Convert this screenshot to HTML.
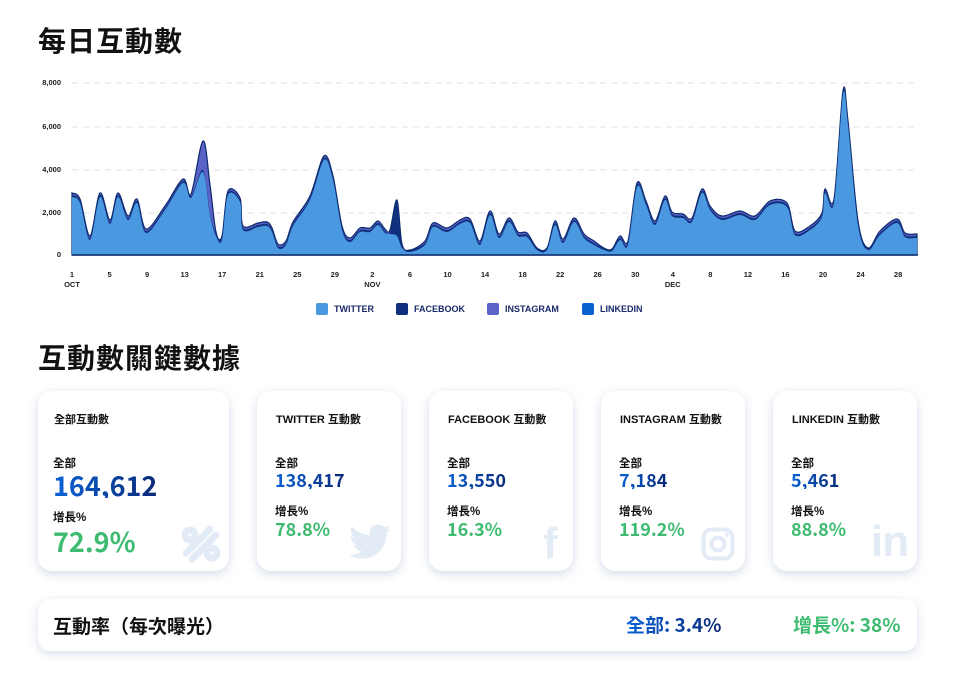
<!DOCTYPE html>
<html><head><meta charset="utf-8"><style>
*{margin:0;padding:0;box-sizing:border-box}
body{width:959px;height:680px;background:#fff;position:relative;overflow:hidden;font-family:"Liberation Sans","Noto Sans CJK TC",sans-serif;color:#111}
.abs{position:absolute}
h1{position:absolute;font-size:28px;font-weight:700;letter-spacing:1px;color:#111}
.card{position:absolute;top:391px;height:180px;background:#fff;border-radius:14px;box-shadow:0 3px 10px rgba(60,90,160,.22);overflow:hidden}
.ct{position:absolute;left:16px;top:20px;font-size:11px;font-weight:700}
.lbl{position:absolute;left:18px;font-size:11.5px;font-weight:700}
.num{position:absolute;left:18px;font-weight:700;font-family:"Noto Sans CJK TC",sans-serif;line-height:1;background:linear-gradient(90deg,#0a62d6,#0a2a78);-webkit-background-clip:text;background-clip:text;color:transparent}
.grn{position:absolute;left:18px;font-weight:700;font-family:"Noto Sans CJK TC",sans-serif;line-height:1;color:#3dbb70}
.ic{position:absolute;color:#e3ebf6;font-weight:700}
.ax{position:absolute;font-size:7.5px;font-weight:700;color:#222;transform:translateX(-50%);text-align:center;line-height:10px}
.yl{position:absolute;font-size:7.5px;font-weight:700;color:#222;right:898px}
.lg{position:absolute;top:303px;font-size:9px;font-weight:700;color:#1a2a6a;display:flex;align-items:center;gap:6px}
.lg i{display:inline-block;width:12px;height:12px;border-radius:2px}
</style></head><body>
<h1 style="left:38px;top:20px">每日互動數</h1>
<div class="yl" style="top:78px">8,000</div>
<div class="yl" style="top:122px">6,000</div>
<div class="yl" style="top:165px">4,000</div>
<div class="yl" style="top:208px">2,000</div>
<div class="yl" style="top:250px">0</div>
<svg class="abs" style="left:0;top:0" width="959" height="300">
<g stroke="#dde2ee" stroke-dasharray="6,5" stroke-width="1">
<line x1="72" y1="83" x2="918" y2="83"/><line x1="72" y1="127" x2="918" y2="127"/><line x1="72" y1="170" x2="918" y2="170"/><line x1="72" y1="213" x2="918" y2="213"/></g>
<path id="tot" fill="#5b63c8" stroke="#0b2a6e" stroke-width="1.2"/>
<path id="fb" fill="#10307e"/>
<path id="tw" fill="#4a98e0"/>
<line x1="72" y1="255" x2="918" y2="255" stroke="#0b2a6e" stroke-width="1.5"/>
</svg>
<div id="xl"></div>
<div class="lg" style="left:316px"><i style="background:#4a98e0"></i>TWITTER</div>
<div class="lg" style="left:396px"><i style="background:#10307e"></i>FACEBOOK</div>
<div class="lg" style="left:487px"><i style="background:#5b63c8"></i>INSTAGRAM</div>
<div class="lg" style="left:582px"><i style="background:#0a62d0"></i>LINKEDIN</div>

<h1 style="left:38px;top:337px">互動數關鍵數據</h1>

<div class="card" style="left:38px;width:191px">
<div class="ct">全部互動數</div>
<div class="lbl" style="top:64px;left:15px">全部</div>
<div class="num" style="top:80px;left:15px;font-size:27px">164,612</div>
<div class="lbl" style="top:118px;left:15px">增長%</div>
<div class="grn" style="top:136px;left:15px;font-size:27px">72.9%</div>
<svg class="abs" style="left:142px;top:132px" width="42" height="42" viewBox="0 0 42 42"><g fill="none" stroke="#e3ebf6" stroke-width="7" stroke-linecap="round"><path d="M6 30 L30 6"/><path d="M12 36 L36 12"/><circle cx="10" cy="12" r="5"/><circle cx="32" cy="30" r="5"/></g></svg>
</div>

<div class="card" style="left:257px;width:144px">
<div class="ct" style="left:19px">TWITTER 互動數</div>
<div class="lbl" style="top:64px">全部</div>
<div class="num" style="top:80px;font-size:18px">138,417</div>
<div class="lbl" style="top:112px">增長%</div>
<div class="grn" style="top:129px;font-size:18px">78.8%</div>
<svg class="abs" style="left:92px;top:133px" width="42" height="36" viewBox="0 0 24 20"><path fill="#e3ebf6" d="M24 2.4a9.8 9.8 0 0 1-2.8.8A4.9 4.9 0 0 0 23.3.4a9.9 9.9 0 0 1-3.1 1.2A4.9 4.9 0 0 0 11.8 6 14 14 0 0 1 1.7.9a4.9 4.9 0 0 0 1.5 6.6A4.9 4.9 0 0 1 1 6.9a4.9 4.9 0 0 0 3.9 4.8 4.9 4.9 0 0 1-2.2.1 4.9 4.9 0 0 0 4.6 3.4A9.9 9.9 0 0 1 0 17.3 14 14 0 0 0 7.5 19.5c9 0 14-7.5 14-14v-.6A10 10 0 0 0 24 2.4z"/></svg>
</div>

<div class="card" style="left:429px;width:144px">
<div class="ct" style="left:19px">FACEBOOK 互動數</div>
<div class="lbl" style="top:64px">全部</div>
<div class="num" style="top:80px;font-size:18px">13,550</div>
<div class="lbl" style="top:112px">增長%</div>
<div class="grn" style="top:129px;font-size:18px">16.3%</div>
<div class="ic" style="left:114px;top:128px;font-size:44px;font-family:'Liberation Sans',sans-serif">f</div>
</div>

<div class="card" style="left:601px;width:144px">
<div class="ct" style="left:19px">INSTAGRAM 互動數</div>
<div class="lbl" style="top:64px">全部</div>
<div class="num" style="top:80px;font-size:18px">7,184</div>
<div class="lbl" style="top:112px">增長%</div>
<div class="grn" style="top:129px;font-size:18px">119.2%</div>
<svg class="abs" style="left:100px;top:136px" width="34" height="34" viewBox="0 0 34 34"><rect x="2.5" y="2.5" width="29" height="29" rx="8" fill="none" stroke="#e3ebf6" stroke-width="4"/><circle cx="17" cy="17" r="6.5" fill="none" stroke="#e3ebf6" stroke-width="4"/><circle cx="26" cy="8" r="2" fill="#e3ebf6"/></svg>
</div>

<div class="card" style="left:773px;width:144px">
<div class="ct" style="left:19px">LINKEDIN 互動數</div>
<div class="lbl" style="top:64px">全部</div>
<div class="num" style="top:80px;font-size:18px">5,461</div>
<div class="lbl" style="top:112px">增長%</div>
<div class="grn" style="top:129px;font-size:18px">88.8%</div>
<div class="ic" style="left:98px;top:126px;font-size:44px;letter-spacing:-1px">in</div>
</div>

<div class="abs" style="left:38px;top:599px;width:879px;height:52px;background:#fff;border-radius:12px;box-shadow:0 3px 10px rgba(60,90,160,.2)">
<div class="abs" style="left:15px;top:13px;font-size:19px;font-weight:700">互動率（每次曝光）</div>
<div class="abs num" style="left:588px;top:16px;font-size:19px">全部: 3.4%</div>
<div class="abs grn" style="left:755px;top:16px;font-size:19px">增長%: 38%</div>
</div>

<script>
var P=[[72,197],[80,203],[90,240],[100,197],[110,224],[118,197],[128,220],[137,203],[146,233],[165,210],[183,183],[191,198],[203,172,141],[210,215,185],[216,236],[222,240],[228,195],[240,202],[243,230],[258,227],[267,226],[272,232],[278,248],[286,245],[293,226],[310,200],[324,160],[333,180],[342,230],[350,242],[360,232],[370,232],[378,225],[385,233],[390,234],[397,236,200],[402,248],[410,252],[425,245],[433,227],[447,232],[460,224],[470,223],[480,245],[490,215],[499,238],[509,222],[518,236],[527,237],[537,250],[547,250],[555,225],[563,243],[574,222],[584,238],[594,245],[604,250],[612,251],[620,240],[628,245],[637,187],[646,205],[655,225],[665,200],[672,216],[683,218],[692,222],[702,193],[710,210],[722,220],[740,215],[755,220],[770,205],[787,207],[795,235],[810,230],[822,217],[825,193],[834,203],[843,95],[848,125],[858,225],[868,250],[880,235],[897,223],[905,237],[917,238]];
function path(pts){var d="M72 255 L"+pts[0][0]+" "+pts[0][1];for(var i=0;i<pts.length-1;i++){var p0=pts[Math.max(0,i-1)],p1=pts[i],p2=pts[i+1],p3=pts[Math.min(pts.length-1,i+2)];var c1x=p1[0]+(p2[0]-p0[0])/6,c1y=p1[1]+(p2[1]-p0[1])/6,c2x=p2[0]-(p3[0]-p1[0])/6,c2y=p2[1]-(p3[1]-p1[1])/6;c1y=Math.min(c1y,255);c2y=Math.min(c2y,255);d+=" C"+c1x.toFixed(1)+" "+c1y.toFixed(1)+" "+c2x.toFixed(1)+" "+c2y.toFixed(1)+" "+p2[0]+" "+p2[1];}return d+" L917 255 Z";}
var tw=P.map(function(p){return[p[0],p[1]]});
var tot=P.map(function(p){return[p[0],p[2]!==undefined?p[2]:Math.max(p[1]-4,p[1]<250?p[1]-4:p[1]-2)]});
var fb=P.map(function(p){return[p[0],(p[0]==397?p[2]:p[1]-2)]});
document.getElementById("tot").setAttribute("d",path(tot));
document.getElementById("fb").setAttribute("d",path(fb));
document.getElementById("tw").setAttribute("d",path(tw));
var labs=["1","5","9","13","17","21","25","29","2","6","10","14","18","22","26","30","4","8","12","16","20","24","28"],sub={0:"OCT",8:"NOV",16:"DEC"},h="";
for(var i=0;i<labs.length;i++){var x=72+i*37.55;h+='<div class="ax" style="left:'+x+'px;top:270px">'+labs[i]+(sub[i]?'<br>'+sub[i]:'')+'</div>';}
document.getElementById("xl").innerHTML=h;
</script>
</body></html>
